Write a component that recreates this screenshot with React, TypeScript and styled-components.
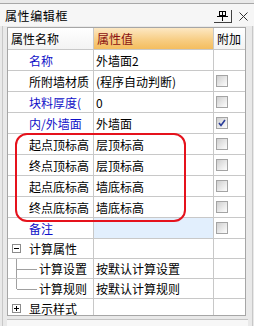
import React from 'react';
import styled, { createGlobalStyle } from 'styled-components';

const Global = createGlobalStyle`
  html, body { margin: 0; padding: 0; background: #eeeeee; }
  body {
    font-family: "Noto Sans CJK SC", "Liberation Sans", sans-serif;
    font-size: 12px;
    color: #000;
  }
`;

const Panel = styled.div`
  width: 254px;
  height: 326px;
  box-sizing: border-box;
  background: #e9e9e9;
  padding-top: 3px;
  display: flex;
  flex-direction: column;
  overflow: hidden;
`;

const TitleBar = styled.div`
  height: 23px;
  box-sizing: border-box;
  border-top: 1px solid #a8a8a8;
  background: #f6f6f6;
  display: flex;
  align-items: center;
  padding: 2px 6px 0 5px;
`;

const TitleText = styled.div`
  flex: 1;
  font-size: 12px;
  line-height: 14px;
  letter-spacing: 0.6px;
  color: #000;
`;

const PinButton = styled.div`
  width: 17px;
  height: 12px;
  display: flex;
  align-items: center;
  justify-content: center;
  border-right: 1px solid #404040;
  border-bottom: 1px solid #404040;
  margin-right: 7px;
`;

const CloseButton = styled.div`
  width: 9px;
  height: 9px;
  display: flex;
  align-items: center;
  justify-content: center;
`;

const Body = styled.div`
  flex: 1;
  display: flex;
  flex-direction: column;
  width: 251px;
  box-sizing: border-box;
  border-left: 1px solid #c8c8c8;
  border-right: 1px solid #c8c8c8;
  margin-left: 2px;
  padding: 1px 4px 0 4px;
  min-height: 0;
`;

const Table = styled.div`
  position: relative;
  width: 239px;
  height: 290px;
  box-sizing: border-box;
  border: 1px solid #a6a6a6;
  background: #fff;
  overflow: hidden;
`;

const Row = styled.div<{ $h?: number }>`
  display: grid;
  grid-template-columns: 86px 120px 31px;
  height: ${(p) => p.$h ?? 21}px;
  box-sizing: border-box;
  border-bottom: 1px solid #c8c8c8;
`;

const HeadCell = styled.div<{ $accent?: boolean; $last?: boolean }>`
  display: flex;
  align-items: center;
  padding-left: 3px;
  box-sizing: border-box;
  border-right: ${(p) => (p.$last ? 'none' : '1px solid #c8c8c8')};
  background: ${(p) =>
    p.$accent
      ? 'linear-gradient(#fde8c4, #f7cc80 60%, #f4bd5e)'
      : 'linear-gradient(#ffffff, #f3f3f3)'};
  color: ${(p) => (p.$accent ? '#8a1010' : '#000')};
  font-size: 12px;
`;

const NameCell = styled.div<{ $blue?: boolean; $indent?: number }>`
  position: relative;
  display: flex;
  align-items: center;
  padding-left: ${(p) => p.$indent ?? 21}px;
  box-sizing: border-box;
  border-right: 1px solid #c8c8c8;
  color: ${(p) => (p.$blue ? '#1010c8' : '#000')};
  white-space: nowrap;
  overflow: hidden;
`;

const ValueCell = styled.div<{ $selected?: boolean }>`
  display: flex;
  align-items: center;
  padding-left: 2px;
  box-sizing: border-box;
  border-right: 1px solid #c8c8c8;
  background: ${(p) => (p.$selected ? '#e2effd' : '#fff')};
  white-space: nowrap;
  overflow: hidden;
`;

const ExtraCell = styled.div`
  display: flex;
  align-items: center;
  padding-left: 2px;
`;

const Box = styled.span`
  width: 12px;
  height: 12px;
  box-sizing: border-box;
  border: 1px solid #a4a4a4;
  background: linear-gradient(135deg, #cfcfcf, #f2f2f2 75%, #fcfcfc);
  display: flex;
  align-items: center;
  justify-content: center;
`;

const Expander = styled.span`
  width: 9px;
  height: 9px;
  box-sizing: border-box;
  border: 1px solid #8c8c8c;
  background: #fff;
  margin-left: 4px;
  margin-right: 8px;
  position: relative;
  flex: none;
`;

const ExpLine = styled.span<{ $v?: boolean }>`
  position: absolute;
  background: #000;
  ${(p) =>
    p.$v
      ? 'left: 3px; top: 1px; width: 1px; height: 5px;'
      : 'left: 1px; top: 3px; width: 5px; height: 1px;'}
`;

const TreeGuide = styled.span<{ $last?: boolean }>`
  position: absolute;
  left: 8px;
  top: 0;
  width: 21px;
  height: ${(p) => (p.$last ? '50%' : '100%')};
  border-left: 1px solid #a0a0a0;
  &::after {
    content: '';
    position: absolute;
    left: 0;
    top: ${(p) => (p.$last ? '100%' : '50%')};
    width: 20px;
    border-top: 1px solid #a0a0a0;
  }
`;

const Highlight = styled.div`
  position: absolute;
  left: 7px;
  top: 105px;
  width: 171px;
  height: 89px;
  box-sizing: border-box;
  border: 2px solid #e5121c;
  border-radius: 12px;
  pointer-events: none;
`;

const Footer = styled.div`
  height: 6px;
  margin-top: 3px;
  border-top: 1px solid #c4c4c4;
  background: #f7f7f7;
`;

const Check = ({ checked }: { checked?: boolean }) => (
  <Box>
    {checked && (
      <svg width="8" height="8" viewBox="0 0 8 8">
        <path d="M1 4 L3 6.5 L7 1" fill="none" stroke="#2a3d9a" strokeWidth="1.6" />
      </svg>
    )}
  </Box>
);

type Item = {
  name: string;
  value: string;
  blue?: boolean;
  check?: 'none' | 'off' | 'on';
  selected?: boolean;
};

const items: Item[] = [
  { name: '名称', value: '外墙面2', blue: true, check: 'none' },
  { name: '所附墙材质', value: '(程序自动判断)', check: 'off' },
  { name: '块料厚度(', value: '0', blue: true, check: 'off' },
  { name: '内/外墙面', value: '外墙面', blue: true, check: 'on' },
  { name: '起点顶标高', value: '层顶标高', check: 'off' },
  { name: '终点顶标高', value: '层顶标高', check: 'off' },
  { name: '起点底标高', value: '墙底标高', check: 'off' },
  { name: '终点底标高', value: '墙底标高', check: 'off' },
  { name: '备注', value: '', blue: true, check: 'off', selected: true },
];

export default function App() {
  return (
    <>
      <Global />
      <Panel>
        <TitleBar>
          <TitleText>属性编辑框</TitleText>
          <PinButton>
            <svg width="11" height="10" viewBox="0 0 11 10">
              <rect x="2.5" y="0.5" width="6" height="4" fill="none" stroke="#000" />
              <rect x="5" y="1" width="1" height="4" fill="#000" />
              <line x1="0" y1="5.5" x2="11" y2="5.5" stroke="#000" />
              <line x1="5.5" y1="6" x2="5.5" y2="10" stroke="#000" />
            </svg>
          </PinButton>
          <CloseButton>
            <svg width="9" height="9" viewBox="0 0 9 9">
              <path d="M0.5 0.5 L8.5 8.5 M8.5 0.5 L0.5 8.5" stroke="#303030" strokeWidth="1" />
            </svg>
          </CloseButton>
        </TitleBar>
        <Body>
          <Table>
            <Row $h={22}>
              <HeadCell>属性名称</HeadCell>
              <HeadCell $accent>属性值</HeadCell>
              <HeadCell $last>附加</HeadCell>
            </Row>
            {items.map((it) => (
              <Row key={it.name}>
                <NameCell $blue={it.blue}>{it.name}</NameCell>
                <ValueCell $selected={it.selected}>{it.value}</ValueCell>
                <ExtraCell>
                  {it.check !== 'none' && <Check checked={it.check === 'on'} />}
                </ExtraCell>
              </Row>
            ))}
            <Row $h={20}>
              <NameCell $indent={0}>
                <Expander>
                  <ExpLine />
                </Expander>
                计算属性
              </NameCell>
              <ValueCell />
              <ExtraCell />
            </Row>
            <Row $h={20}>
              <NameCell $indent={31}>
                <TreeGuide />
                计算设置
              </NameCell>
              <ValueCell>按默认计算设置</ValueCell>
              <ExtraCell />
            </Row>
            <Row $h={20}>
              <NameCell $indent={31}>
                <TreeGuide $last />
                计算规则
              </NameCell>
              <ValueCell>按默认计算规则</ValueCell>
              <ExtraCell />
            </Row>
            <Row $h={20}>
              <NameCell $indent={0}>
                <Expander>
                  <ExpLine />
                  <ExpLine $v />
                </Expander>
                显示样式
              </NameCell>
              <ValueCell />
              <ExtraCell />
            </Row>
            <Highlight />
          </Table>
          <Footer />
        </Body>
      </Panel>
    </>
  );
}
